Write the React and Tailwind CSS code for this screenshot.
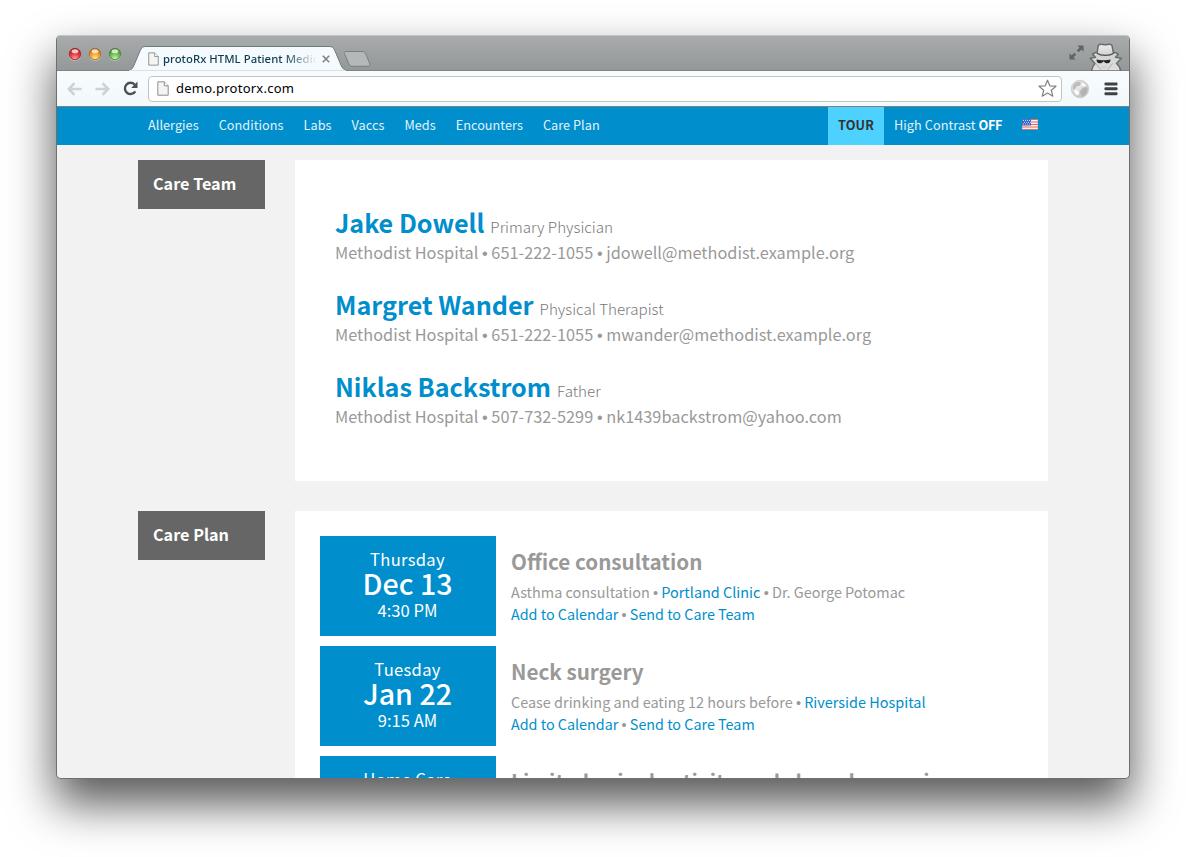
const cjk = "font-['Noto_Sans_CJK_SC','Noto_Sans',sans-serif]";

const navLinks = ["Allergies", "Conditions", "Labs", "Vaccs", "Meds", "Encounters", "Care Plan"];

const team = [
  { name: "Jake Dowell", role: "Primary Physician", phone: "651-222-1055", email: "jdowell@methodist.example.org" },
  { name: "Margret Wander", role: "Physical Therapist", phone: "651-222-1055", email: "mwander@methodist.example.org" },
  { name: "Niklas Backstrom", role: "Father", phone: "507-732-5299", email: "nk1439backstrom@yahoo.com" },
];

const plan = [
  { day: "Thursday", date: "Dec 13", time: "4:30 PM", title: "Office consultation", note: "Asthma consultation", place: "Portland Clinic", extra: "Dr. George Potomac" },
  { day: "Tuesday", date: "Jan 22", time: "9:15 AM", title: "Neck surgery", note: "Cease drinking and eating 12 hours before", place: "Riverside Hospital" },
  { day: "Home Care", title: "Limited spinal activity and chose long pain" },
];

function Dot() {
  return (
    <>
      {" "}
      <span className="font-['Liberation_Sans',sans-serif] leading-none text-[#999]">•</span>{" "}
    </>
  );
}

function Light({ id, dark, mid, glow }) {
  return (
    <svg className="h-[14px] w-[14px]" viewBox="0 0 14 14">
      <defs>
        <radialGradient id={id} cx="0.5" cy="0.9" r="0.85">
          <stop offset="0" stopColor={glow} />
          <stop offset="0.55" stopColor={mid} />
          <stop offset="1" stopColor={dark} />
        </radialGradient>
      </defs>
      <circle cx="7" cy="8" r="6" fill="#fff" opacity="0.35" />
      <circle cx="7" cy="7" r="5.7" fill={`url(#${id})`} stroke={dark} strokeWidth="0.8" />
      <ellipse cx="7" cy="4.2" rx="3.3" ry="2" fill="#fff" opacity="0.75" />
    </svg>
  );
}

function PageIcon({ className }) {
  return (
    <svg className={className} viewBox="0 0 12 15" fill="none">
      <path d="M0.8 0.8H7.3L11.2 4.8V14.2H0.8Z" fill="#f4f4f4" stroke="#8d8d8d" strokeWidth="1" />
      <path d="M7.3 0.8V4.8H11.2" fill="#fff" stroke="#8d8d8d" strokeWidth="1" />
    </svg>
  );
}

function Incognito() {
  return (
    <svg className="h-[29px] w-[36px]" viewBox="0 0 36 29">
      <defs>
        <linearGradient id="coat" x1="0" y1="0" x2="0" y2="1">
          <stop offset="0" stopColor="#ededed" />
          <stop offset="0.4" stopColor="#d2d2d2" />
          <stop offset="1" stopColor="#dedede" />
        </linearGradient>
      </defs>
      <path
        d="M3.500 29C4 25.500 5 23.500 7 21.500L2.200 16.200L7.500 15.200L4.600 12.400C5 11.200 6.500 10.700 9.200 10.200L10.300 3.400C12.500 1.200 15 3 17.200 2.800C19.500 3 22 1.200 24 3.400L25.200 10.200C28 10.700 29.700 11.200 30.200 12.400L27.500 15.200L33.500 16.200L28.500 21.500C31 23.500 32.200 25.500 32.700 29Z"
        fill="url(#coat)"
        stroke="#6a6d6e"
        strokeWidth="1.500"
        strokeLinejoin="round"
      />
      <path d="M8.800 11.200C13.500 14 21.500 14 25.800 11.200" fill="none" stroke="#4c4c4c" strokeWidth="1.300" />
      <path d="M8.500 17.600C11 18.200 13.500 18.400 15.500 18.300C18 18.400 20 18.200 22.500 17.600C22.500 19.800 21.500 21.300 19.500 21.300C17.600 21.300 16.700 20.400 15.900 19.400H15.300C14.600 20.400 13.600 21.300 11.600 21.300C9.500 21.300 8.500 19.800 8.500 17.600Z" fill="#262626" />
      <path d="M8 21.500L13.500 28.500M24.500 21.500L19 28.500" stroke="#a9a9a9" strokeWidth="0.900" />
      <path d="M14 24.500L16 26L18.500 24" fill="none" stroke="#b5b5b5" strokeWidth="0.800" />
    </svg>
  );
}

function TitleBar() {
  return (
    <div className="flex h-[36px] shrink-0 border-t border-b border-t-[#c3c6c7] border-b-[#808485] bg-linear-to-b from-[#a7abac] to-[#949899] pl-[11px]">
      <div className="mt-[11px] flex h-[14px] gap-[6px]">
        <Light id="red" dark="#a51d24" mid="#e03a40" glow="#ff9c95" />
        <Light id="amber" dark="#a9671a" mid="#f0a22e" glow="#ffe98f" />
        <Light id="green" dark="#3f8230" mid="#67bd4e" glow="#c9f5a5" />
      </div>
      <div className="relative ml-[5px] h-[35px] w-[224px] shrink-0">
        <svg className="absolute inset-0 h-[35px] w-[224px]" viewBox="0 0 224 35">
          <path d="M0 34.800C4 34.600 5.500 33 7.500 28L13 15C14.500 11.500 16 10.500 19 10.500H202C205 10.500 206.500 11.500 208 15L213.500 28C215.500 33 217.500 34.600 221 34.800Z" fill="#f4fafd" stroke="#74787a" strokeWidth="1" />
          <path d="M2 35H219" stroke="#f4fafd" strokeWidth="1.600" />
        </svg>
        <div className="relative mt-[11px] flex h-[23px] items-center pl-[21px]">
          <PageIcon className="h-[14px] w-[11px] shrink-0" />
          <span className="ml-[4px] w-[154px] overflow-hidden mask-r-from-78% mask-r-to-100% font-['Noto_Sans','Open_Sans',sans-serif] text-[11.300px] leading-[18px] font-medium tracking-[0.050px] whitespace-nowrap text-[#0d3a50]">
            protoRx HTML Patient Medic
          </span>
          <svg className="ml-[5px] h-[8px] w-[8px] shrink-0" viewBox="0 0 8 8">
            <path d="M0.800 0.800L7.200 7.200M7.200 0.800L0.800 7.200" stroke="#808284" strokeWidth="1.600" />
          </svg>
        </div>
      </div>
      <svg className="-ml-[9px] mt-[14px] h-[18px] w-[30px] shrink-0" viewBox="0 0 30 18">
        <path d="M3.500 1.500H20C22 1.500 23 2.200 23.800 4L27.500 13C28.200 15 27.600 16.300 26 16.300H10.500C8.500 16.300 7.500 15.500 6.800 13.800L2.500 3.600C2 2.300 2.400 1.500 3.500 1.500Z" fill="#b4b8b9" stroke="#7a7e7f" />
      </svg>
      <div className="ml-auto flex pr-[5px]">
        <svg className="mt-[9px] h-[15px] w-[15px]" viewBox="0 0 15 15" fill="#5f6364">
          <path d="M8.300 0.500H14.500V6.700L12.300 4.500L9.700 7.200L7.800 5.300L10.500 2.700Z" />
          <path d="M6.700 14.500H0.500V8.300L2.700 10.500L5.300 7.800L7.200 9.700L4.500 12.300Z" />
        </svg>
        <div className="mt-[6px] ml-[4px]"><Incognito /></div>
      </div>
    </div>
  );
}

function Toolbar() {
  return (
    <div className="flex h-[36px] shrink-0 items-center border-b border-[#7d8183] bg-linear-to-b from-[#f8fcfe] to-[#f2f8fb] pl-[10px]">
      <svg className="h-[14px] w-[15px]" viewBox="0 0 15 14" fill="none" stroke="#cdd2d3" strokeWidth="2.600">
        <path d="M14.500 7H2.500M7.500 1.200L1.800 7L7.500 12.800" />
      </svg>
      <svg className="ml-[13px] h-[14px] w-[15px]" viewBox="0 0 15 14" fill="none" stroke="#cdd2d3" strokeWidth="2.600">
        <path d="M0.500 7H12.500M7.500 1.200L13.200 7L7.500 12.800" />
      </svg>
      <svg className="ml-[13px] h-[15px] w-[15px]" viewBox="0 0 15 15" fill="none">
        <path d="M12.300 10.300A5.600 5.600 0 1 1 11.600 3.600" stroke="#4d5052" strokeWidth="2.400" />
        <path d="M14.500 0.600V7H8.200Z" fill="#4d5052" />
      </svg>
      <div className="ml-[10px] flex h-[26px] w-[914px] items-center rounded-[4px] border border-[#bfc4c7] bg-white pr-[4px] pl-[8px]">
        <PageIcon className="h-[15px] w-[12px]" />
        <span className="mb-[2px] ml-[7px] font-['Noto_Sans','Open_Sans',sans-serif] text-[13px] leading-[18px] tracking-[0.240px] text-black">demo.protorx.com</span>
        <svg className="ml-auto h-[19px] w-[19px]" viewBox="0 0 19 19" fill="#fff" stroke="#7f8284" strokeWidth="1.200" strokeLinejoin="round">
          <path d="M9.500 1.200L11.800 6.800L18 7.200L13.300 11.200L14.800 17.200L9.500 14L4.200 17.200L5.700 11.200L1 7.200L7.200 6.800Z" />
        </svg>
      </div>
      <svg className="ml-[8px] h-[20px] w-[20px]" viewBox="0 0 20 20">
        <defs>
          <radialGradient id="globe" cx="0.35" cy="0.3" r="0.85">
            <stop offset="0" stopColor="#f2f2f2" />
            <stop offset="1" stopColor="#b9b9b9" />
          </radialGradient>
        </defs>
        <circle cx="10" cy="10" r="8.700" fill="url(#globe)" stroke="#c8cacb" strokeWidth="0.800" />
        <path d="M3 7C4 4.500 6 3 8.500 2.500L11 4L9.500 7L6.500 7.500L5 10L3 10.500ZM10 12L12.500 9L15.500 8L17.500 9.500C17.500 13 15.500 16 12.500 17.200L10.500 15Z" fill="#a8a8a8" opacity="0.700" />
        <path d="M12 4L15 5L16 7L13.500 7.500L11.500 6ZM4 11.500L7 11L9 13.500L8 16.500C6 16 4.500 14 4 11.500Z" fill="#fff" />
      </svg>
      <svg className="ml-[14px] h-[14px] w-[14px]" viewBox="0 0 14 14" fill="#3f4244">
        <rect x="0.500" y="0.500" width="13" height="3" rx="1" />
        <rect x="0.500" y="5.300" width="13" height="3" rx="1" />
        <rect x="0.500" y="10.200" width="13" height="3" rx="1" />
      </svg>
    </div>
  );
}

function Flag() {
  return (
    <svg className="h-[11px] w-[16px]" viewBox="0 0 16 11">
      <rect width="16" height="11" fill="#fbf3f1" />
      <path d="M0 0.500H16M0 3H16M0 5.500H16M0 8H16M0 10.500H16" stroke="#e0564c" strokeWidth="0.900" />
      <rect width="9" height="6.500" fill="#2f5fd0" />
      <path d="M1 1.500H9M2 3.300H9M1 5H9" stroke="#dfe8ff" strokeWidth="0.900" strokeDasharray="1 1" />
      <rect x="0.250" y="0.250" width="15.500" height="10.500" fill="none" stroke="#c98a80" strokeWidth="0.500" opacity="0.600" />
    </svg>
  );
}

function Nav() {
  return (
    <nav className="flex h-[38px] shrink-0 bg-[#008ecc] pr-[81px] pl-[81px] text-[12.700px] leading-[36px] text-[#e3f4fb]">
      {navLinks.map((label) => (
        <a key={label} className="px-[10px] tracking-[0.035px] whitespace-nowrap">{label}</a>
      ))}
      <a className="ml-auto bg-[#4dd2ff] px-[10px] font-bold tracking-[0.120px] text-[#333]">TOUR</a>
      <a className="px-[10px] whitespace-nowrap">
        <span className="tracking-[0.060px]">High Contrast </span><b className="font-bold tracking-[-0.400px] text-white">OFF</b>
      </a>
      <a className="px-[10px] pt-[12px]"><Flag /></a>
    </nav>
  );
}

function Section({ label, children }) {
  return (
    <section className="flex items-start gap-[30px]">
      <h2 className="h-[49px] w-[127px] shrink-0 bg-[#666] pl-[15px] text-[16.200px] leading-[46px] font-bold text-white">{label}</h2>
      {children}
    </section>
  );
}

function CareTeam() {
  return (
    <div className="flex h-[321px] w-[753px] flex-col gap-[24px] bg-white pt-[47px] pl-[40px]">
      {team.map((m) => (
        <div key={m.name} className="h-[58px]">
          <div className="flex h-[30px] items-baseline gap-[6px] whitespace-nowrap">
            <span className="text-[25.150px] leading-[30px] font-bold text-[#008ecc]">{m.name}</span>
            <span className="text-[15.200px] leading-[24px] font-light text-[#777]">{m.role}</span>
          </div>
          <p className="mt-[3px] text-[16.300px] leading-[24px] tracking-[0.015px] whitespace-nowrap text-[#999]">
            Methodist Hospital<Dot />{m.phone}<Dot />{m.email}
          </p>
        </div>
      ))}
    </div>
  );
}

function CarePlan() {
  return (
    <div className="flex w-[753px] flex-col gap-[10px] bg-white px-[25px] pt-[25px]">
      {plan.map((p) => (
        <div key={p.title} className="flex h-[100px] gap-[15px]">
          <div className="w-[176px] shrink-0 bg-[#008ecc] pt-[13px] pr-[1px] text-center text-[16.600px] text-white">
            <div className="leading-[20px] tracking-[0.300px]">{p.day}</div>
            <div className="text-[28.600px] leading-[28px] font-medium">{p.date}</div>
            <div className="leading-[26px]">{p.time}</div>
          </div>
          <div className="pt-[11px] text-[14.450px] leading-[22px] whitespace-nowrap text-[#999]">
            <h3 className="mb-[6px] text-[20.650px] leading-[28px] font-bold">{p.title}</h3>
            {p.note && (
              <>
                <p className="h-[22px]">
                  {p.note}<Dot /><a className="text-[#008ecc]">{p.place}</a>
                  {p.extra && <><Dot />{p.extra}</>}
                </p>
                <p className="h-[22px] text-[14.350px]">
                  <a className="text-[#008ecc]">Add to Calendar</a><Dot /><a className="text-[#008ecc]">Send to Care Team</a>
                </p>
              </>
            )}
          </div>
        </div>
      ))}
    </div>
  );
}

export default function App() {
  return (
    <div className="h-[857px] w-[1186px] overflow-hidden bg-white pt-[35px] pl-[56px]">
      <div className={`flex h-[744px] w-[1074px] flex-col overflow-hidden rounded-[5px] border-x border-b border-[#6f6f6f] bg-[#f2f2f2] shadow-[0_24px_46px_1px_rgba(0,0,0,0.66)] ${cjk}`}>
        <TitleBar />
        <Toolbar />
        <Nav />
        <main className="flex min-h-0 flex-1 flex-col gap-[30px] overflow-hidden pt-[15px] pl-[81px]">
          <Section label="Care Team"><CareTeam /></Section>
          <Section label="Care Plan"><CarePlan /></Section>
        </main>
      </div>
    </div>
  );
}
